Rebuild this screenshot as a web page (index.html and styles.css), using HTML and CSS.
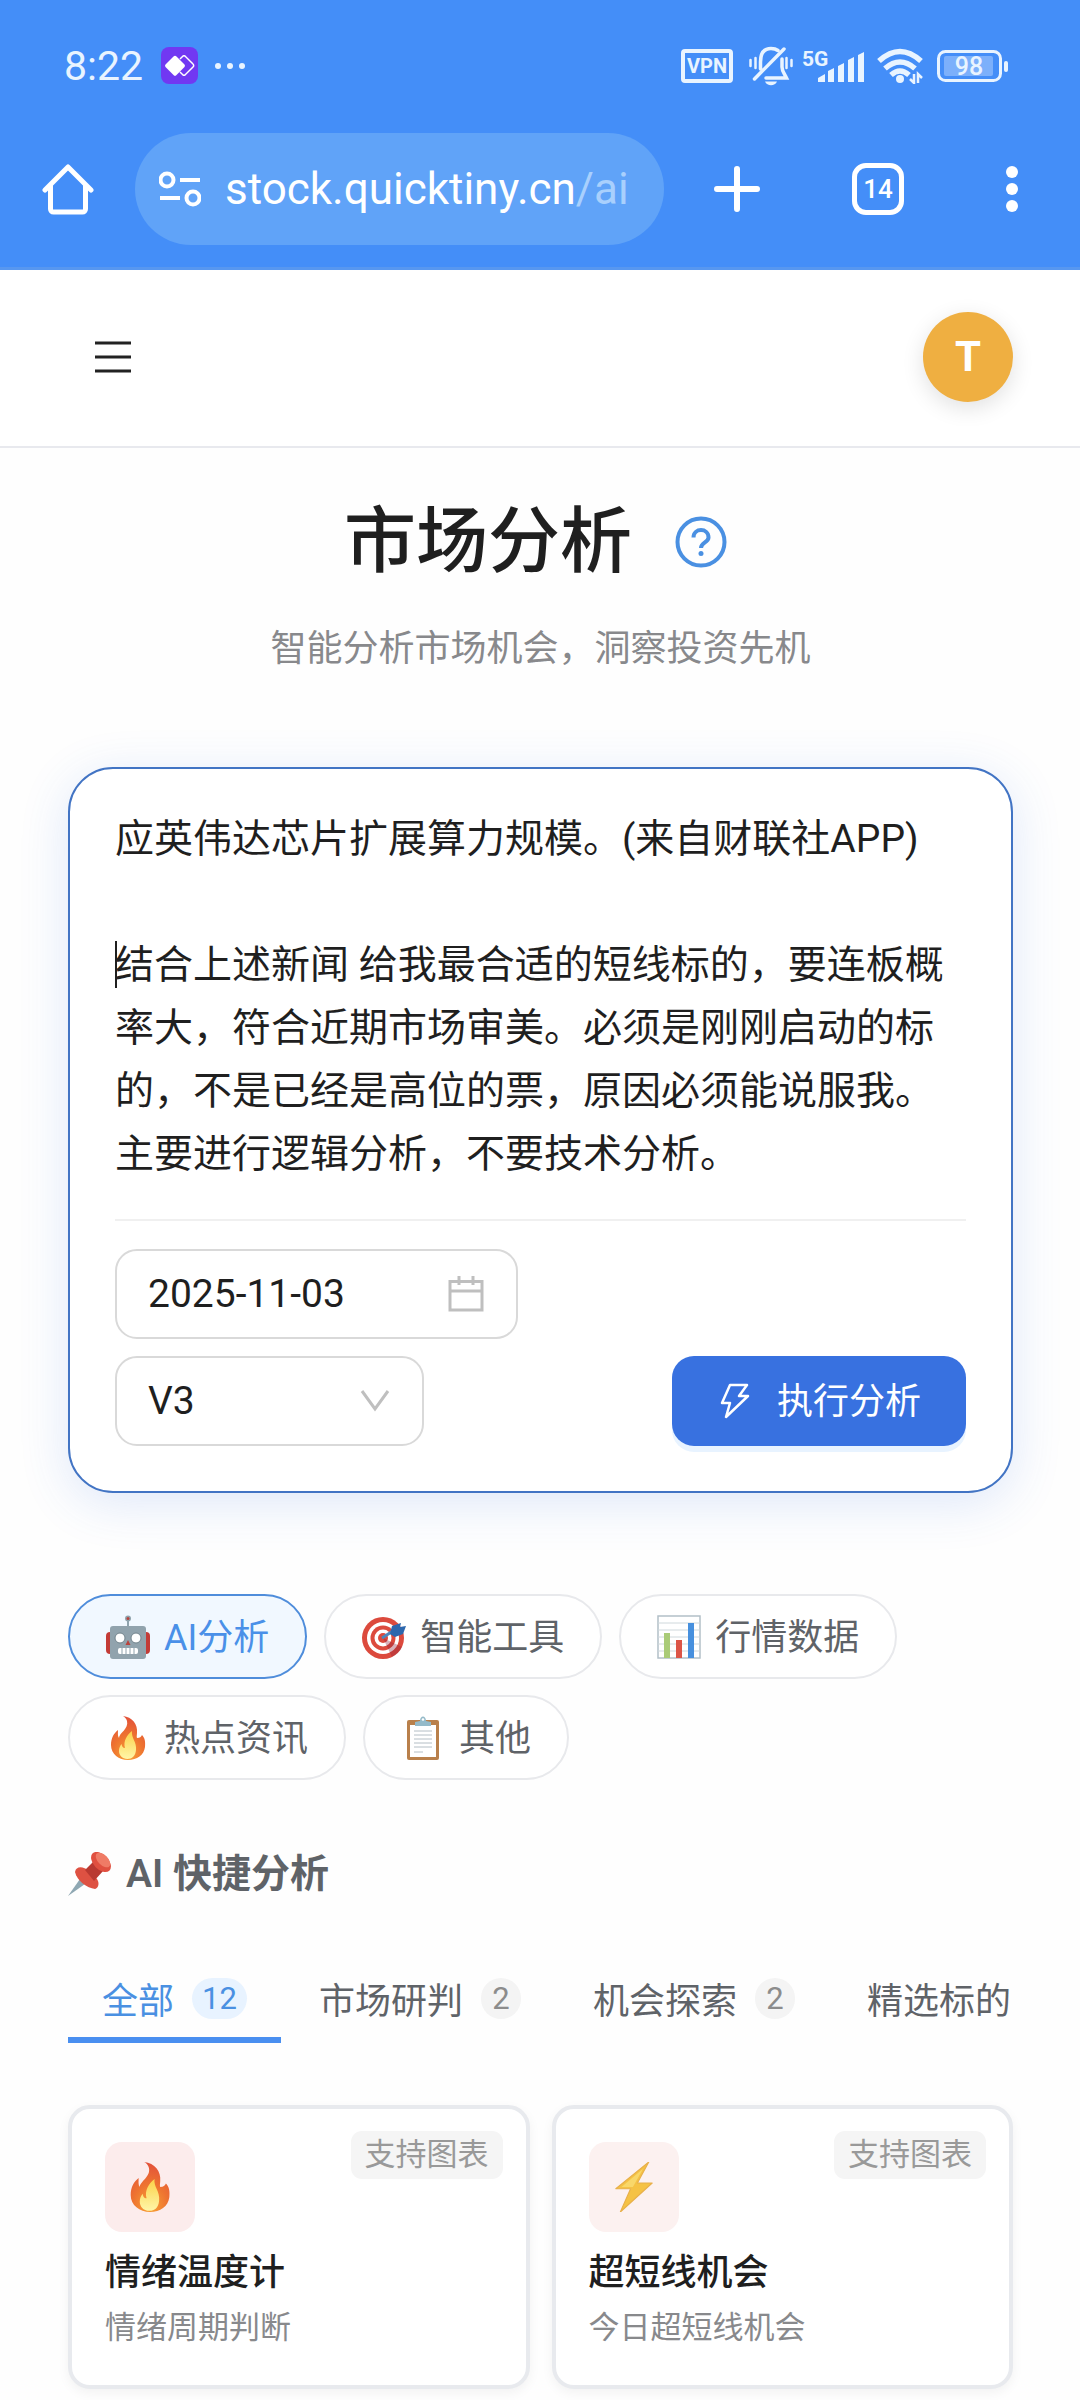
FILE: index.html
```html
<!DOCTYPE html>
<html lang="zh-CN">
<head>
<meta charset="utf-8">
<meta name="viewport" content="width=device-width, initial-scale=1">
<title>市场分析</title>
<link rel="stylesheet" href="styles.css">
</head>
<body>
<svg class="sprite" aria-hidden="true">
  <defs>
    <radialGradient id="flame-outer" cx="50%" cy="90%" r="90%">
      <stop offset="0" stop-color="#f9a436"/><stop offset=".5" stop-color="#ee7430"/><stop offset="1" stop-color="#e2503a"/>
    </radialGradient>
    <linearGradient id="flame-inner" x1="0" y1="0" x2="0" y2="1">
      <stop offset="0" stop-color="#fbd148"/><stop offset="1" stop-color="#fff6a8"/>
    </linearGradient>
  </defs>
  <symbol id="robot" viewBox="0 0 44 44">
    <path d="M22 4v10" stroke="#90a4ae" stroke-width="2"/>
    <circle cx="22" cy="3.5" r="3" fill="#90a4ae"/><circle cx="22" cy="3.5" r="1.5" fill="#b8433c"/>
    <rect x="0" y="17" width="44" height="22" rx="4" fill="#c33b36"/>
    <rect x="4" y="11" width="36" height="33" rx="3" fill="#91a3ad"/>
    <circle cx="14" cy="23" r="5" fill="#fff" stroke="#72838c"/><circle cx="30" cy="23" r="5" fill="#fff" stroke="#72838c"/>
    <path d="M22 25l2.500 5h-5z" fill="#b8433c"/>
    <rect x="12" y="33" width="20" height="6" rx="2" fill="#fff"/>
    <path d="M16 33v6M20 33v6M24 33v6M28 33v6" stroke="#91a3ad"/>
  </symbol>
  <symbol id="target" viewBox="0 0 44 44">
    <circle cx="21" cy="23" r="21" fill="#dc4a3d"/><circle cx="21" cy="23" r="16" fill="#fff"/>
    <circle cx="21" cy="23" r="12.500" fill="#dc4a3d"/><circle cx="21" cy="23" r="8.500" fill="#fff"/>
    <circle cx="21" cy="23" r="5" fill="#dc4a3d"/>
    <path d="M21 23L40 32a21 21 0 0 1-10 10z" fill="#8e1f3a" opacity=".35"/>
    <path d="M20 23L34 14" stroke="#4b87bd" stroke-width="3"/>
    <path d="M28 19l2-8 9-3-1 4 6-1-3 8-8 3z" fill="#2d67ad"/>
  </symbol>
  <symbol id="chart" viewBox="0 0 44 44">
    <rect x="1" y="1" width="42" height="42" fill="#fff" stroke="#b3c0c8" stroke-width="1.500"/>
    <path d="M1 8h42M1 15h42M1 22h42M1 29h42M1 36h42" stroke="#cfd8dc"/>
    <path d="M7 18h6v25H7z" fill="#aacb77"/><path d="M19 25h6v18h-6z" fill="#dc5547"/><path d="M31 8h6v35h-6z" fill="#4790de"/>
  </symbol>
  <symbol id="fire" viewBox="0 0 44 44">
    <path d="M17 0c9 1 15 8 14 17-.1 2-.5 4 0 5 3 0 4-1 5-3 3 3 3.500 7 3 12-1 8-8 13-17 13S5 38 5 29c0-7 3-12 7-15 0 3-.5 6 1 8 0-5 10-9 8-17-.5-2-2-4-4-5z" fill="url(#flame-outer)"/>
    <path d="M26 15c-1 7 5 11 4 19-.5 6-4 9-8.500 9C16 43 13 39 13 35c0-3 1-5 2.500-7 .5 2 1 4 3.500 4-2-7 2-13 7-17z" fill="url(#flame-inner)"/>
  </symbol>
  <symbol id="clipboard" viewBox="0 0 44 44">
    <rect x="6" y="4" width="32" height="40" rx="2" fill="#b9804b"/><path d="M9 9h26v32H9z" fill="#fff"/>
    <path d="M13 15h18M13 19h18M13 23h18M13 27h18M13 31h18M13 36h9" stroke="#b4bec5"/>
    <path d="M14 10V6l5-1c0-6 6-6 6 0l5 1v4z" fill="#94bac9"/><circle cx="22" cy="3.500" r="1.300" fill="#fff"/>
  </symbol>
  <symbol id="pin" viewBox="0 0 44 44">
    <path d="M0 44l12-17 5 5z" fill="#8fa8b3"/>
    <path d="M7 20c1-6 8-6 14-1l8 8c3 5 1 9-2 10-8-1-18-8-20-17z" fill="#de5142"/>
    <path d="M17 18l10-10 9 10-10 11z" fill="#b93931"/>
    <ellipse cx="33" cy="10" rx="12" ry="7.500" transform="rotate(46 33 10)" fill="#e05040"/>
    <ellipse cx="35" cy="8" rx="9" ry="5" transform="rotate(46 35 8)" fill="#ef7b66"/>
  </symbol>
  <symbol id="bolt" viewBox="0 0 44 44">
    <path d="M35 0L6 23.500h13L10 44 38 18.500H25z" fill="#f5c245" stroke="#e8b04a" stroke-linejoin="round"/>
    <path d="M30 6L11 22h10z" fill="#fbe07a" opacity=".7"/>
  </symbol>
</svg>

<header class="chrome">
  <div class="status">
    <span class="clock">8:22</span>
    <svg class="app-badge" width="37" height="37" viewBox="0 0 37 37" aria-hidden="true">
      <rect width="37" height="37" rx="8" fill="#7138f2"/>
      <path d="M19 12l3-3a2 2 0 0 1 2 0l8 8a2 2 0 0 1 0 3l-8 8a2 2 0 0 1-2 0l-3-3" fill="none" stroke="#fff" stroke-width="1.500"/>
      <path d="M12.500 9.500a2 2 0 0 1 3 0l8 8a2 2 0 0 1 0 2.500l-8 8a2 2 0 0 1-3 0l-8-8a2 2 0 0 1 0-2.500z" fill="#fff"/>
    </svg>
    <svg class="more-dots" width="32" height="8" viewBox="0 0 32 8" fill="#e9f4ff" aria-hidden="true"><circle cx="4" cy="4" r="3"/><circle cx="16" cy="4" r="3"/><circle cx="28" cy="4" r="3"/></svg>
    <div class="indicators">
      <svg width="52" height="34" viewBox="0 0 52 34"><rect x="2" y="2" width="48" height="30" rx="2" fill="none" stroke="#e9f4ff" stroke-width="4"/><text class="glyph-text" x="26" y="24" font-size="20" font-weight="700" text-anchor="middle">VPN</text></svg>
      <svg class="bell" width="44" height="40" viewBox="0 0 44 40" fill="none" stroke="#e9f4ff" stroke-width="3.500" stroke-linecap="round" aria-hidden="true">
        <path d="M11.500 23v-7C11.500 7 15 2.500 22 2.500c3 0 5 .5 7 2M33 13v8c0 4 2 6 4.500 11H17"/><path d="M5.500 33L35 3"/><path d="M16 35.500h12c-2 5-10 5-12 0z" fill="#e9f4ff" stroke="none"/>
        <path d="M1.500 14v6M6.500 12v10M37.500 12v10M42.500 14v6" stroke-width="2.500"/>
      </svg>
      <svg class="signal" width="62" height="40" viewBox="0 0 62 40" fill="#e9f4ff">
        <text class="glyph-text" x="0" y="20" font-size="21" font-weight="700">5G</text>
        <path d="M16 36v-4l7-4v8zM26 36V25l6-3v14zM36 36V20l6-3v19zM46 36V14l6-3v25zM56 36V9l6-3v30z"/>
      </svg>
      <svg class="wifi" width="46" height="36" viewBox="0 0 46 36" fill="none" stroke="#e9f4ff" stroke-width="5.500" aria-hidden="true">
        <path d="M2 13q21-19 42 0M8 20.500q15-13 30 0M14 27q9-8 18 0"/><circle cx="23" cy="31" r="4" fill="#e9f4ff" stroke="none"/><path d="M37 26v9l-4-4M41 35v-9l4 4" stroke-width="2.500"/>
      </svg>
      <svg class="battery" width="72" height="32" viewBox="0 0 72 32"><rect x="1.500" y="1.500" width="62" height="29" rx="7" fill="none" stroke="#e9f4ff" stroke-width="3"/><rect x="7" y="6" width="49" height="20" rx="2" fill="#7cb0fb"/><rect x="67" y="11" width="4" height="11" rx="2" fill="#e9f4ff"/><text class="glyph-text" x="32" y="25" font-size="25" font-weight="500" text-anchor="middle">98</text></svg>
    </div>
  </div>
  <nav class="toolbar" aria-label="浏览器">
    <button class="plain" type="button" aria-label="主页"><svg width="52" height="52" viewBox="0 0 52 52" fill="none" stroke="#fff" stroke-width="5" stroke-linecap="round" stroke-linejoin="round"><path d="M3 27L26 4l23 23M8.500 23v23a3 3 0 0 0 3 3h29a3 3 0 0 0 3-3V23"/></svg></button>
    <button class="address" type="button">
      <svg width="42" height="36" viewBox="0 0 42 36" fill="none" stroke="#fff" stroke-width="4" aria-hidden="true"><circle cx="8" cy="9" r="6.500"/><circle cx="34" cy="27" r="6.500"/><path d="M21 9h20M1 27h20"/></svg>
      <span>stock.quicktiny.cn<span class="path">/ai</span></span>
    </button>
    <button class="plain" type="button" aria-label="新建标签页"><svg width="46" height="46" viewBox="0 0 46 46" stroke="#fff" stroke-width="6" stroke-linecap="round"><path d="M23 3v40M3 23h40"/></svg></button>
    <button class="plain tab-count" type="button">14</button>
    <button class="plain" type="button" aria-label="菜单"><svg width="12" height="48" viewBox="0 0 12 48" fill="#fff"><circle cx="6" cy="7" r="6"/><circle cx="6" cy="24" r="6"/><circle cx="6" cy="41" r="6"/></svg></button>
  </nav>
</header>

<header class="site-bar">
  <button class="plain" type="button" aria-label="展开菜单"><svg width="36" height="32" viewBox="0 0 36 32" stroke="#222" stroke-width="3"><path d="M0 2h36M0 16h36M0 30h36"/></svg></button>
  <button class="avatar" type="button">T</button>
</header>

<main class="page">
  <div class="title-row">
    <h1>市场分析</h1>
    <button class="plain" type="button" aria-label="帮助"><svg width="52" height="52" viewBox="0 0 52 52" fill="none" stroke="#4a90e2" stroke-width="4"><circle cx="26" cy="26" r="23.500"/><path d="M18.500 21.500c0-10 15-10 15 0 0 5-7.500 5-7.500 10.500"/><circle cx="26" cy="37.500" r="2.500" fill="#4a90e2" stroke="none"/></svg></button>
  </div>
  <p class="subtitle">智能分析市场机会，洞察投资先机</p>

  <form class="composer">
    <div class="prompt">
      <textarea rows="6" aria-label="分析内容" spellcheck="false">应英伟达芯片扩展算力规模。(来自财联社APP)

结合上述新闻 给我最合适的短线标的，要连板概率大，符合近期市场审美。必须是刚刚启动的标的，不是已经是高位的票，原因必须能说服我。主要进行逻辑分析，不要技术分析。</textarea>
      <span class="caret"></span>
    </div>
    <div class="controls">
      <label class="field date">
        <input type="text" value="2025-11-03" aria-label="日期">
        <svg width="36" height="36" viewBox="0 0 36 36" fill="none" stroke="#bfbfbf" stroke-width="3" aria-hidden="true"><path d="M2 5.500h32v28.500H2zM2 15h32M11 0v9M25 0v9"/></svg>
      </label>
      <label class="field model">
        <select aria-label="模型"><option>V3</option></select>
        <svg width="30" height="22" viewBox="0 0 30 22" fill="none" stroke="#bfbfbf" stroke-width="3" aria-hidden="true"><path d="M2 1l13 18L28 1"/></svg>
      </label>
      <button class="run" type="button">
        <svg width="30" height="36" viewBox="0 0 30 36" fill="none" stroke="#fff" stroke-width="2.500" stroke-linejoin="round" aria-hidden="true"><path d="M10 2h17l-8 11h9L6 34l4-14H2z"/></svg>
        <span>执行分析</span>
      </button>
    </div>
  </form>

  <div class="chips">
    <button class="chip active" type="button"><svg class="emoji"><use href="#robot"/></svg><span>AI分析</span></button>
    <button class="chip" type="button"><svg class="emoji"><use href="#target"/></svg><span>智能工具</span></button>
    <button class="chip" type="button"><svg class="emoji"><use href="#chart"/></svg><span>行情数据</span></button>
    <button class="chip" type="button"><svg class="emoji"><use href="#fire"/></svg><span>热点资讯</span></button>
    <button class="chip" type="button"><svg class="emoji"><use href="#clipboard"/></svg><span>其他</span></button>
  </div>

  <h2><svg class="emoji"><use href="#pin"/></svg>AI 快捷分析</h2>

  <div class="tabs">
    <button class="tab active" type="button">全部<span class="count">12</span></button>
    <button class="tab" type="button">市场研判<span class="count">2</span></button>
    <button class="tab" type="button">机会探索<span class="count">2</span></button>
    <button class="tab" type="button">精选标的</button>
  </div>

  <div class="cards">
    <article class="card">
      <div class="card-top">
        <span class="tile"><svg class="emoji big"><use href="#fire"/></svg></span>
        <span class="tag">支持图表</span>
      </div>
      <h3>情绪温度计</h3>
      <p>情绪周期判断</p>
    </article>
    <article class="card">
      <div class="card-top">
        <span class="tile pale"><svg class="emoji big"><use href="#bolt"/></svg></span>
        <span class="tag">支持图表</span>
      </div>
      <h3>超短线机会</h3>
      <p>今日超短线机会</p>
    </article>
  </div>
</main>
</body>
</html>
```
FILE: styles.css
```css
* { box-sizing: border-box; }

body {
  margin: 0;
  background: #fefefe;
  color: #1f1f1f;
  font-family: Roboto, "Noto Sans CJK SC", sans-serif;
  font-size: 36px;
}

button, input, select, textarea { font: inherit; color: inherit; }
button { cursor: pointer; }
svg { display: block; flex: none; }
h1, h2, h3, p { margin: 0; }

.sprite { position: absolute; width: 0; height: 0; }
.plain { display: block; padding: 0; border: 0; background: none; }
.emoji { width: 44px; height: 44px; }
.emoji.big { width: 50px; height: 50px; }

/* Browser chrome */
.chrome {
  background: #448ef8;
  border-bottom: 3px solid #5797f0;
  padding-bottom: 22px;
}
.status {
  display: flex;
  align-items: center;
  height: 133px;
  padding: 0 71px 2px 64px;
  color: #e9f4ff;
}
.clock { font-size: 41px; }
.app-badge { margin-left: 18px; }
.more-dots { margin-left: 16px; }
.indicators { display: flex; align-items: center; margin-left: auto; }
.bell { margin-left: 16px; }
.signal { margin-left: 9px; }
.wifi { margin-left: 13px; }
.battery { margin-left: 14px; }
.glyph-text { fill: #e9f4ff; font-family: Roboto, sans-serif; }

.toolbar {
  display: flex;
  align-items: center;
  height: 112px;
  padding: 0 62px 0 42px;
}
.address {
  display: flex;
  align-items: center;
  gap: 24px;
  flex: 1;
  min-width: 0;
  height: 112px;
  margin: 0 50px 0 41px;
  padding: 0 24px;
  border: 0;
  border-radius: 56px;
  background: #60a3f8;
  color: #fff;
  font-size: 44px;
  white-space: nowrap;
}
.path { color: #a9d0fd; }
.tab-count {
  width: 52px;
  height: 52px;
  margin: 0 102px 0 92px;
  border: 5px solid #fff;
  border-radius: 14px;
  color: #fff;
  font-size: 26px;
  font-weight: 500;
}

/* Site header */
.site-bar {
  display: flex;
  align-items: center;
  justify-content: space-between;
  height: 178px;
  padding: 0 67px 3px 95px;
  border-bottom: 2px solid #e8e9ee;
  background: #fff;
}
.avatar {
  width: 90px;
  height: 90px;
  padding: 0;
  border: 0;
  border-radius: 50%;
  background: #efaf41;
  box-shadow: 0 6px 22px rgba(0, 0, 0, .12);
  color: #fff;
  font-size: 42px;
  font-weight: 700;
}

.page { padding: 44px 67px 11px 68px; }

.title-row {
  display: flex;
  align-items: center;
  justify-content: center;
  gap: 43px;
  padding-right: 10px;
}
h1 { font-size: 72px; line-height: 100px; font-weight: 500; }
.subtitle {
  margin-top: 27px;
  color: #88898c;
  line-height: 60px;
  text-align: center;
}

/* Prompt composer */
.composer {
  margin-top: 88px;
  padding: 39px 45px 45px;
  border: 2px solid #4274c4;
  border-radius: 45px;
  background: #fff;
  box-shadow: 0 10px 50px rgba(56, 113, 224, .16);
  font-size: 39px;
}
.prompt {
  position: relative;
  padding-bottom: 33px;
  border-bottom: 2px solid #f0f0f0;
}
textarea {
  display: block;
  width: 100%;
  padding: 0;
  border: 0;
  outline: 0;
  resize: none;
  overflow: hidden;
  background: none;
  line-height: 63px;
}
.caret {
  position: absolute;
  left: 0;
  top: 133px;
  width: 2px;
  height: 47px;
  background: #1f1f1f;
}
.controls {
  display: grid;
  grid-template-columns: 1fr auto;
  gap: 17px;
  padding-top: 28px;
}
.field {
  display: flex;
  align-items: center;
  height: 90px;
  padding: 0 32px 0 31px;
  border: 2px solid #d9d9d9;
  border-radius: 22px;
}
.field input, .field select {
  flex: 1;
  min-width: 0;
  padding: 0;
  border: 0;
  outline: 0;
  appearance: none;
  background: none;
}
.date { grid-column: 1 / -1; width: 403px; }
.model { width: 309px; }
.run {
  display: flex;
  align-items: center;
  gap: 27px;
  height: 90px;
  padding: 0 45px 0 48px;
  border: 0;
  border-radius: 22px;
  background: #3871e0;
  box-shadow: 0 6px 0 #e8f3ff;
  color: #fff;
  font-size: 36px;
}
.run span, .chip span { padding-bottom: 6px; }

/* Category chips */
.chips {
  display: flex;
  flex-wrap: wrap;
  gap: 16px 17px;
  margin-top: 101px;
}
.chip {
  display: flex;
  align-items: center;
  gap: 14px;
  height: 85px;
  padding: 0 36px;
  border: 2px solid #e8e9ec;
  border-radius: 43px;
  background: #fff;
  color: #5f6368;
}
.chip.active {
  border-color: #4f8ddb;
  background: #f1f8ff;
  color: #4a90e8;
}

h2 {
  display: flex;
  align-items: center;
  gap: 14px;
  margin-top: 64px;
  color: #5f6368;
  font-size: 39px;
  line-height: 60px;
  font-weight: 600;
}

/* Tabs */
.tabs {
  display: flex;
  gap: 4px;
  margin-top: 55px;
  overflow: hidden;
}
.tab {
  display: flex;
  align-items: center;
  gap: 18px;
  flex: none;
  height: 84px;
  padding: 0 34px;
  border: 0;
  border-bottom: 6px solid transparent;
  background: none;
  color: #5f6368;
}
.tab:last-child { padding-right: 0; }
.tab.active { border-color: #4a8ff0; color: #4a90e2; }
.count {
  min-width: 40px;
  height: 41px;
  padding: 0 10px;
  border-radius: 21px;
  background: #f4f4f4;
  color: #8c8c8c;
  font-size: 31px;
  line-height: 41px;
  text-align: center;
}
.tab.active .count { background: #e8f3ff; color: #4a90e2; }

/* Quick analysis cards */
.cards {
  display: grid;
  grid-template-columns: 1fr 1fr;
  gap: 22px;
  margin-top: 62px;
}
.card {
  padding: 33px;
  border: 4px solid #e8eaee;
  border-radius: 22px;
  background: #fff;
  box-shadow: 0 4px 12px rgba(0, 0, 0, .05);
}
.card-top {
  display: flex;
  align-items: flex-start;
  justify-content: space-between;
  margin: 0 -10px 0 0;
}
.tile {
  display: grid;
  place-items: center;
  width: 90px;
  height: 90px;
  border-radius: 17px;
  background: #fcecec;
}
.tile.pale { background: #fcf1f0; }
.tag {
  margin-top: -11px;
  padding: 0 14px;
  border-radius: 11px;
  background: #f5f5f5;
  color: #999;
  font-size: 31px;
  line-height: 48px;
}
.card h3 { margin-top: 14px; font-size: 36px; line-height: 54px; font-weight: 500; }
.card p { margin-top: 4px; color: #88898c; font-size: 31px; line-height: 48px; }
```
